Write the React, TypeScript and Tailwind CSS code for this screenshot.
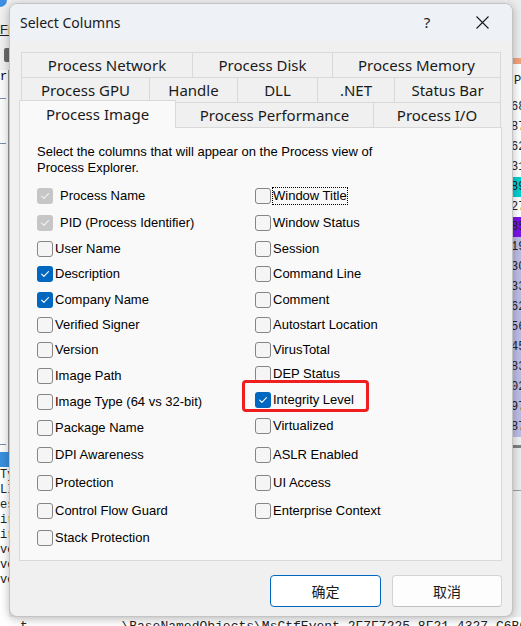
import React from "react";

type Kind = "off" | "on" | "dim";

type Item = {
  label: string;
  kind: Kind;
  focus?: boolean;
  lift?: boolean;
  marked?: boolean;
};

const leftItems: Item[] = [
  { label: "Process Name", kind: "dim" },
  { label: "PID (Process Identifier)", kind: "dim" },
  { label: "User Name", kind: "off" },
  { label: "Description", kind: "on" },
  { label: "Company Name", kind: "on" },
  { label: "Verified Signer", kind: "off" },
  { label: "Version", kind: "off" },
  { label: "Image Path", kind: "off" },
  { label: "Image Type (64 vs 32-bit)", kind: "off" },
  { label: "Package Name", kind: "off" },
  { label: "DPI Awareness", kind: "off" },
  { label: "Protection", kind: "off" },
  { label: "Control Flow Guard", kind: "off" },
  { label: "Stack Protection", kind: "off" },
];

const rightItems: Item[] = [
  { label: "Window Title", kind: "off", focus: true },
  { label: "Window Status", kind: "off" },
  { label: "Session", kind: "off" },
  { label: "Command Line", kind: "off" },
  { label: "Comment", kind: "off" },
  { label: "Autostart Location", kind: "off" },
  { label: "VirusTotal", kind: "off" },
  { label: "DEP Status", kind: "off", lift: true },
  { label: "Integrity Level", kind: "on", lift: true, marked: true },
  { label: "Virtualized", kind: "off", lift: true },
  { label: "ASLR Enabled", kind: "off" },
  { label: "UI Access", kind: "off" },
  { label: "Enterprise Context", kind: "off" },
];

const tabRows = [
  [
    { label: "Process Network", w: "w-[171px]" },
    { label: "Process Disk", w: "w-[140px]" },
    { label: "Process Memory", w: "w-[169px]" },
  ],
  [
    { label: "Process GPU", w: "w-[128px]" },
    { label: "Handle", w: "w-[88px]" },
    { label: "DLL", w: "w-[80px]" },
    { label: ".NET", w: "w-[77px]" },
    { label: "Status Bar", w: "w-[107px]" },
  ],
];

// right edge of the Process Explorer list behind the dialog
const sideRows = [
  { t: "68", bg: "bg-white" },
  { t: "87", bg: "bg-white" },
  { t: "62", bg: "bg-white" },
  { t: "31", bg: "bg-white" },
  { t: "89", bg: "bg-[#00cfcf]" },
  { t: "27", bg: "bg-white" },
  { t: "85", bg: "bg-[#7a14e6]" },
  { t: "19", bg: "bg-[#bcbce6]" },
  { t: "30", bg: "bg-[#bcbce6]" },
  { t: "33", bg: "bg-[#bcbce6]" },
  { t: "62", bg: "bg-[#bcbce6]" },
  { t: "56", bg: "bg-[#bcbce6]" },
  { t: "45", bg: "bg-[#bcbce6]" },
  { t: "83", bg: "bg-[#bcbce6]" },
  { t: "02", bg: "bg-[#bcbce6]" },
  { t: "97", bg: "bg-[#bcbce6]" },
  { t: "87", bg: "bg-[#bcbce6]" },
];

const lowerLines = ["Ty", "LI", "es", "ir", "ir", "ve", "ve", "ve"];

const Check = ({ color }: { color: string }) => (
  <svg width="16" height="16" viewBox="0 0 16 16" fill="none">
    <path d="M4.6 8.2 L6.9 10.4 L11.5 5.6" stroke={color} strokeWidth="1.1" strokeLinecap="round" strokeLinejoin="round" />
  </svg>
);

const Box = ({ kind }: { kind: Kind }) => {
  if (kind === "on")
    return (
      <span className="flex h-4 w-4 shrink-0 items-center justify-center rounded-[3px] bg-[#0067c0]">
        <Check color="#ffffff" />
      </span>
    );
  if (kind === "dim")
    return (
      <span className="flex h-4 w-4 shrink-0 items-center justify-center rounded-[3px] bg-[#c6c6c6]">
        <Check color="#f2f2f2" />
      </span>
    );
  return <span className="h-4 w-4 shrink-0 rounded-[3px] border border-[#858585] bg-[#f5f5f5]" />;
};

const Option = ({ item }: { item: Item }) => (
  <div className="flex items-center">
    <div className={`relative flex items-center ${item.lift ? "mb-[4px]" : ""}`}>
      <Box kind={item.kind} />
      <span
        className={`border leading-[16px] whitespace-nowrap ${item.kind === "dim" ? "ml-[6px]" : "ml-[1px]"} ${
          item.focus ? "border-dotted border-black" : "border-transparent"
        }`}
      >
        {item.label}
      </span>
      {item.marked && (
        <span className="pointer-events-none absolute -left-[13px] -top-[11px] h-[32px] w-[127px] rounded-[4px] border-[3px] border-[#f01e1e]" />
      )}
    </div>
  </div>
);

export default function App() {
  const rows = leftItems.map((l, i) => [l, rightItems[i]] as const);

  return (
    <div className="relative h-[626px] w-[521px] overflow-hidden bg-[#f0f0f0] font-['Liberation_Sans',Arial,sans-serif] text-[13px] text-black">
      {/* window behind */}
      <div className="flex h-full flex-col">
        <div className="flex flex-1">
          <div className="flex w-[9px] flex-col">
            <div className="h-[22px]">
              <span className="block h-[7px] w-[7px] rounded-br-full bg-[#3d8ee0]" />
            </div>
            <div className="h-[16px] text-[13px] leading-[16px] text-[#222] underline">Fi</div>
            <div className="h-[10px]" />
            <div className="h-[14px] w-[5px] self-end rounded-l-[2px] bg-[#6a6a6a]" />
            <div className="h-[8px]" />
            <div className="flex h-[382px] flex-col border-r border-[#9a9a9a] bg-[#fbfbfb] font-['Liberation_Mono',monospace] text-[12px] leading-[14px]">
              <span>r</span>
              <span className="mt-[14px] h-px w-[6px] bg-[#7a8ab0]" />
              <span className="mt-[44px] h-px w-[6px] bg-[#7a8ab0]" />
              <span className="mt-[300px] h-px w-[6px] bg-[#7a8ab0]" />
            </div>
            <div className="h-[15px] bg-[#3b8fdb]" />
            <div className="flex flex-1 flex-col bg-white pt-[1px] font-['Liberation_Mono',monospace] text-[12px] leading-[15px] text-[#222]">
              {lowerLines.map((t, i) => (
                <span key={i}>{t}</span>
              ))}
            </div>
          </div>
          <div className="flex-1" />
          <div className="flex w-[14px] flex-col overflow-hidden font-['Liberation_Mono',monospace] text-[12px] leading-[20px] text-[#222]">
            <div className="h-[58px] bg-[#ececec]" />
            <div className="h-[6px] bg-[#f0a47c]" />
            <div className="flex h-[33px] items-center bg-white pl-[7px]">P</div>
            {sideRows.map((r, i) => (
              <div key={i} className={`h-[20px] pl-[4px] whitespace-nowrap ${r.bg}`}>
                {r.t}
              </div>
            ))}
            <div className="h-[8px] bg-[#f0f0f0]" />
            <div className="h-[3px] bg-[#808080]" />
            <div className="h-[42px] bg-[#ededed]" />
            <div className="h-px bg-[#a0a0a0]" />
            <div className="flex-1 bg-[#f0f0f0]" />
          </div>
        </div>
        <div className="h-[9px] overflow-hidden whitespace-pre bg-white pl-[20px] pt-[3px] font-['Liberation_Mono',monospace] text-[13px] leading-[14px] text-[#222]">
          {"t            \\BaseNamedObjects\\MsCtfEvent 2F7F7225-8F21-4327-C6B6-8060F"}
        </div>
      </div>

      {/* dialog */}
      <div className="absolute left-[9px] top-[3px] flex h-[614px] w-[504px] flex-col overflow-hidden rounded-[8px] border border-[#c4c4c4] bg-[#f0f0f0] shadow-[0_2px_10px_rgba(0,0,0,0.28)]">
        <div className="flex h-[37px] shrink-0 items-center bg-[#eef1f6] pl-[10px] font-['Noto_Sans',sans-serif] text-[14px] text-[#1a1a1a]">
          <span className="flex-1">Select Columns</span>
          <span className="flex w-[46px] justify-center text-[15px]">?</span>
          <span className="ml-[9px] mr-[7px] flex w-[46px] justify-center">
            <svg width="13" height="13" viewBox="0 0 13 13">
              <path d="M0.5 0.5 L12.5 12.5 M12.5 0.5 L0.5 12.5" stroke="#1a1a1a" strokeWidth="1.1" />
            </svg>
          </span>
        </div>

        <div className="mt-[11px] flex flex-col pl-[9px] font-['Noto_Sans',sans-serif] text-[15px] text-[#1a1a1a]">
          {tabRows.map((row, ri) => (
            <div key={ri} className="ml-[2px] flex h-[25px]">
              {row.map((t, ti) => (
                <div
                  key={t.label}
                  className={`flex items-center justify-center border-l border-t border-[#d9d9d9] ${t.w} ${
                    ti === row.length - 1 ? "border-r" : ""
                  }`}
                >
                  {t.label}
                </div>
              ))}
            </div>
          ))}
          <div className="-mt-[2px] flex h-[27px] items-end">
            <div className="relative z-10 -mb-px flex h-[28px] w-[157px] items-center justify-center border-l border-r border-t border-[#d9d9d9] bg-[#f9f9f9] pb-[1px]">
              Process Image
            </div>
            <div className="flex h-[25px] w-[197px] items-center justify-center border-t border-[#d9d9d9]">
              Process Performance
            </div>
            <div className="flex h-[25px] w-[128px] items-center justify-center border-l border-r border-t border-[#d9d9d9]">
              Process I/O
            </div>
          </div>

          <div className="flex h-[434px] w-[483px] flex-col border border-[#d9d9d9] bg-[#f9f9f9] pl-[17px] pt-[16px] font-['Liberation_Sans',Arial,sans-serif] text-[13px] text-black">
            <p className="leading-[16px] whitespace-nowrap">
              Select the columns that will appear on the Process view of
              <br />
              Process Explorer.
            </p>
            <div className="mt-[7px] grid grid-cols-[218px_1fr] grid-rows-[26px_28px_24px_26px_26px_24px_26px_26px_26px_26px_28px_28px_28px_26px]">
              {rows.map(([l, r], i) => (
                <React.Fragment key={i}>
                  <Option item={l} />
                  {r ? <Option item={r} /> : <div />}
                </React.Fragment>
              ))}
            </div>
          </div>
        </div>

        <div className="mt-[14px] flex justify-end gap-[11px] pr-[10px] font-['Noto_Sans_CJK_SC',sans-serif] text-[14px] text-[#1a1a1a]">
          <button className="flex h-[32px] w-[111px] items-center justify-center rounded-[4px] border border-[#0067c0] bg-white">
            确定
          </button>
          <button className="flex h-[32px] w-[110px] items-center justify-center rounded-[4px] border border-[#d3d3d3] border-b-[#c0c0c0] bg-[#fdfdfd]">
            取消
          </button>
        </div>
      </div>
    </div>
  );
}
